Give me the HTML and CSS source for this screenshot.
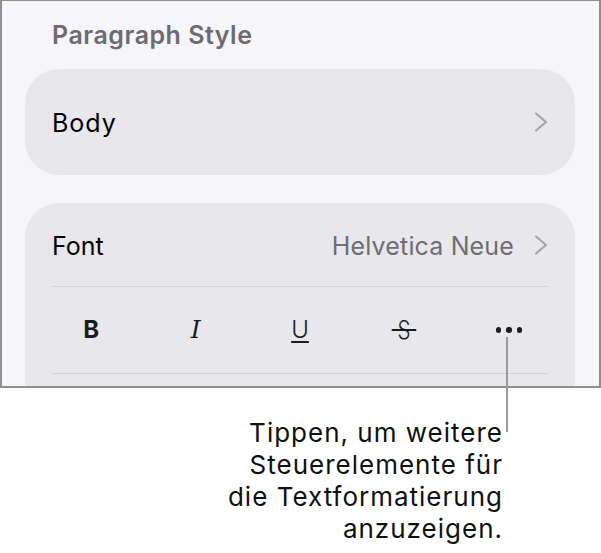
FILE: index.html
```html
<!DOCTYPE html>
<html lang="de">
<head>
<meta charset="utf-8">
<title>Paragraph Style</title>
<link rel="stylesheet" href="styles.css">
</head>
<body>
<div class="page">
  <div class="frame">
    <div class="heading">Paragraph Style</div>
    <div class="card card-style">
      <span class="label label-wide">Body</span>
      <svg class="chev" width="14" height="20" viewBox="0 0 14 20"><polyline points="2,1.5 12,10 2,18.5" fill="none" stroke="#a3a3a8" stroke-width="2" stroke-linecap="round" stroke-linejoin="round"/></svg>
    </div>
    <div class="card card-font">
      <div class="row-font">
        <span class="label">Font</span>
        <span class="value">Helvetica Neue</span>
        <svg class="chev" width="14" height="20" viewBox="0 0 14 20"><polyline points="2,1.5 12,10 2,18.5" fill="none" stroke="#a3a3a8" stroke-width="2" stroke-linecap="round" stroke-linejoin="round"/></svg>
      </div>
      <div class="divider"></div>
      <div class="row-buttons">
        <span class="btn btn-b">B</span>
        <span class="btn btn-i">I</span>
        <span class="btn btn-u">U</span>
        <span class="btn btn-s">S</span>
        <span class="btn btn-more"><i></i><i></i><i></i></span>
      </div>
      <div class="divider"></div>
    </div>
  </div>
  <div class="callout-line"></div>
  <div class="callout">Tippen, um weitere<br>Steuerelemente für<br>die Textformatierung<br>anzuzeigen.</div>
</div>
</body>
</html>
```

FILE: styles.css
```css
html, body {
  margin: 0;
  padding: 0;
  background: #ffffff;
}
.page {
  position: relative;
  width: 601px;
  height: 553px;
  font-family: "Inter", "Roboto", "Liberation Sans", sans-serif;
  color: #000;
}
.frame {
  box-sizing: border-box;
  width: 601px;
  height: 388px;
  border: 2px solid #8f8f8f;
  border-top-width: 1px;
  background: #f6f6f9;
  overflow: hidden;
  padding-top: 19px;
}
.heading {
  font-size: 25px;
  line-height: 30px;
  font-weight: 600;
  color: #6c6c71;
  padding-left: 50px;
  letter-spacing: 0.5px;
}
.card {
  margin-left: 23px;
  width: 550px;
  background: #e8e7ec;
  border-radius: 34px;
}
.card-style {
  margin-top: 19px;
  height: 106px;
  display: flex;
  align-items: center;
  justify-content: space-between;
  padding: 0 27px;
  box-sizing: border-box;
}
.label {
  font-size: 25px;
  line-height: 30px;
  padding-top: 2px;
}
.label-wide {
  letter-spacing: 1px;
}
.chev {
  display: block;
}
.card-font {
  margin-top: 28px;
  height: 260px;
}
.row-font {
  height: 83px;
  display: flex;
  align-items: center;
  padding: 0 27px;
}
.row-font .value {
  margin-left: auto;
  margin-right: 20px;
  font-size: 25px;
  line-height: 30px;
  padding-top: 2px;
  letter-spacing: 0.15px;
  color: #6e6e73;
}
.divider {
  height: 1px;
  margin: 0 27px;
  background: #d2d2d7;
}
.row-buttons {
  height: 86px;
  display: grid;
  grid-template-columns: repeat(5, 1fr);
  padding: 0 14px;
  align-items: center;
  justify-items: center;
  color: #1c1c1e;
}
.btn {
  display: flex;
  align-items: center;
  justify-content: center;
  height: 30px;
  line-height: 30px;
}
.btn-b {
  font-size: 24px;
  font-weight: 700;
}
.btn-i {
  font-family: "DejaVu Serif", "Liberation Serif", serif;
  font-style: italic;
  font-size: 25px;
  font-weight: 400;
}
.btn-u {
  font-size: 24px;
  font-weight: 300;
  text-decoration: underline;
  text-decoration-thickness: 1.5px;
  text-underline-offset: 3px;
}
.btn-s {
  font-size: 25px;
  font-weight: 300;
  position: relative;
  transform: scaleX(0.82);
}
.btn-s::after {
  content: "";
  position: absolute;
  left: -7px;
  right: -7px;
  top: 14px;
  height: 1.5px;
  background: #1c1c1e;
}
.btn-more {
  gap: 5px;
}
.btn-more i {
  display: block;
  width: 5.5px;
  height: 5.5px;
  border-radius: 50%;
  background: #1c1c1e;
}
.callout-line {
  position: absolute;
  left: 506px;
  top: 337px;
  width: 2px;
  height: 95px;
  background: #9a9a9a;
}
.callout {
  width: 503px;
  margin-top: 29px;
  text-align: right;
  font-size: 26px;
  line-height: 32px;
  letter-spacing: 1px;
  color: #111;
}
```
